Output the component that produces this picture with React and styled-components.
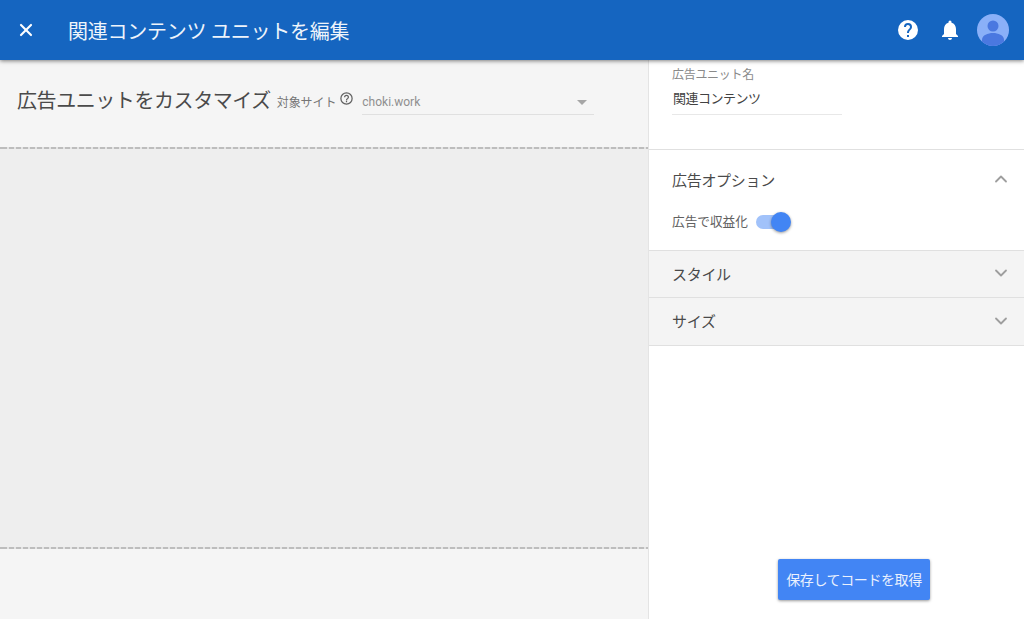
import React from 'react';
import styled, {createGlobalStyle} from 'styled-components';
import {ChevronDown, ChevronUp, X} from 'lucide-react';

const GlobalStyle = createGlobalStyle`
  html, body {
    margin: 0;
    height: 100%;
    overflow: hidden;
    background: #fff;
    font-family: Roboto, "Noto Sans CJK JP", sans-serif;
  }
  #root {
    height: 100%;
  }
`;

const Page = styled.div`
  display: flex;
  flex-direction: column;
  height: 619px;
`;

const Header = styled.header`
  position: relative;
  z-index: 2;
  display: flex;
  align-items: center;
  flex: 0 0 60px;
  padding: 0 15px 0 16px;
  background: #1565c0;
  box-shadow: 0 1px 4px rgba(0, 0, 0, 0.5);
  color: #fff;
`;

const CloseButton = styled.div`
  display: flex;
  width: 20px;
  height: 20px;
  margin-right: 33px;
`;

const HeaderTitle = styled.div`
  flex: 1;
  margin-left: -1px;
  font-size: 20px;
  letter-spacing: -0.25px;
  color: #eef4fb;
`;

const HeaderActions = styled.div`
  display: flex;
  align-items: center;
  gap: 18px;

  & > svg:last-child {
    margin-left: -3px;
  }
`;

const Body = styled.div`
  display: flex;
  flex: 1;
  min-height: 0;
`;

const Preview = styled.main`
  display: flex;
  flex-direction: column;
  flex: 0 0 649px;
  box-sizing: border-box;
  border-right: 1px solid #e4e4e4;
  background: #f5f5f5;
`;

const PreviewBar = styled.div`
  display: flex;
  align-items: center;
  flex: 0 0 87px;
  box-sizing: border-box;
  padding: 0 54px 8px 17px;
`;

const PreviewTitle = styled.h1`
  margin: 0 6px 0 0;
  font-size: 20px;
  font-weight: 400;
  letter-spacing: -0.43px;
  color: #4a4a4a;
`;

const SiteLabel = styled.span`
  margin-top: 3px;
  font-size: 12px;
  letter-spacing: -0.1px;
  color: #757575;
`;

const HelpWrap = styled.span`
  display: flex;
  margin: -2px 8px 0 3px;
`;

const SiteSelect = styled.div`
  display: flex;
  flex: 1;
  align-items: center;
  justify-content: space-between;
  box-sizing: border-box;
  height: 30px;
  margin-top: 1px;
  padding: 5px 7px 0 0;
  border-bottom: 1px solid #e0e0e0;
  font-size: 12px;
  color: #8f8f8f;
`;

const Caret = styled.span`
  width: 0;
  height: 0;
  border-left: 5px solid transparent;
  border-right: 5px solid transparent;
  border-top: 5px solid #a6a6a6;
`;

const DashedRule = styled.div`
  flex: 0 0 2px;
  background: repeating-linear-gradient(90deg, #bdbdbd 0 5px, #e4e4e4 5px 7px) 2px 0;
`;

const Canvas = styled.div`
  flex: 0 0 398px;
  background: #eeeeee;
`;

const Sidebar = styled.aside`
  display: flex;
  flex-direction: column;
  flex: 1;
  background: #fff;
`;

const NameBlock = styled.div`
  flex: 0 0 90px;
  box-sizing: border-box;
  padding: 7px 23px 0;
  border-bottom: 1px solid #e0e0e0;
`;

const FieldLabel = styled.div`
  font-size: 12px;
  line-height: 16px;
  letter-spacing: -0.3px;
  color: #8a8a8a;
`;

const FieldValue = styled.div`
  box-sizing: border-box;
  width: 170px;
  height: 32px;
  padding: 7px 0 0 1px;
  border-bottom: 1px solid #e8e8e8;
  font-size: 13px;
  line-height: 18px;
  letter-spacing: -0.5px;
  color: #424242;
`;

const Section = styled.section`
  border-bottom: 1px solid #e0e0e0;
  background: ${({$open}) => ($open ? '#fff' : '#f4f4f4')};
`;

const SectionHeader = styled.div`
  display: flex;
  align-items: center;
  justify-content: space-between;
  box-sizing: border-box;
  height: ${({$open}) => ($open ? '60px' : '46.4px')};
  padding: 0 13px 2px 23px;
  font-size: 15px;
  letter-spacing: -0.3px;
  color: #4a4a4a;
`;

const OptionRow = styled.div`
  display: flex;
  align-items: center;
  height: 24px;
  padding: 0 23px 16px;
  font-size: 12.67px;
  color: #616161;
`;

const OptionLabel = styled.span`
  margin-top: -3px;
`;

const Toggle = styled.span`
  position: relative;
  width: 31px;
  height: 14px;
  margin-left: 8px;
  border-radius: 7px;
  background: #a1c2fa;

  &::after {
    content: '';
    position: absolute;
    top: -3px;
    right: -4px;
    width: 20px;
    height: 20px;
    border-radius: 50%;
    background: #4285f4;
    box-shadow: 0 1px 3px rgba(0, 0, 0, 0.4);
  }
`;

const Footer = styled.div`
  display: flex;
  flex: 1;
  align-items: flex-end;
  justify-content: flex-end;
  padding: 0 94px 19px 0;
`;

const SaveButton = styled.button`
  width: 152px;
  height: 41px;
  padding: 0 0 2px;
  border: 0;
  border-radius: 2px;
  background: #4285f4;
  box-shadow: 0 1px 3px rgba(0, 0, 0, 0.4);
  font-family: inherit;
  font-size: 14px;
  letter-spacing: -0.4px;
  color: #eaf1fe;
`;

const HelpIcon = () => (
  <svg width="24" height="24" viewBox="0 0 24 24">
    <path fill="#fff" d="M12 2a10 10 0 1 0 0 20 10 10 0 0 0 0-20zm1 17h-2v-2h2v2zm2.07-7.75-.9.92C13.45 12.9 13 13.5 13 15h-2v-.5c0-1.1.45-2.1 1.17-2.83l1.24-1.26A2 2 0 1 0 10 9H8a4 4 0 1 1 8 0c0 .88-.36 1.68-.93 2.25z" />
  </svg>
);

const BellIcon = () => (
  <svg width="24" height="24" viewBox="0 0 24 24">
    <path fill="#fff" d="M12 22c1.1 0 2-.9 2-2h-4c0 1.1.9 2 2 2zm6-6v-5c0-3.07-1.63-5.64-4.5-6.32V4a1.5 1.5 0 0 0-3 0v.68C7.64 5.36 6 7.92 6 11v5l-2 2v1h16v-1l-2-2z" />
  </svg>
);

const Avatar = () => (
  <svg width="32" height="32" viewBox="0 0 32 32">
    <defs>
      <clipPath id="avatar-clip">
        <circle cx="16" cy="16" r="16" />
      </clipPath>
    </defs>
    <g clipPath="url(#avatar-clip)">
      <rect width="32" height="32" fill="#8ab0f8" />
      <circle cx="16" cy="12" r="5.5" fill="#4a78e0" />
      <path fill="#4a78e0" d="M5 32v-6c0-5 6-7 11-7s11 2 11 7v6z" />
    </g>
  </svg>
);

const SmallHelp = () => (
  <svg width="15" height="15" viewBox="0 0 24 24">
    <path fill="#616161" d="M11 18h2v-2h-2v2zm1-16a10 10 0 1 0 0 20 10 10 0 0 0 0-20zm0 18a8 8 0 1 1 0-16 8 8 0 0 1 0 16zm0-14a4 4 0 0 0-4 4h2a2 2 0 1 1 4 0c0 2-3 1.75-3 5h2c0-2.25 3-2.5 3-5a4 4 0 0 0-4-4z" />
  </svg>
);

const App = () => {
  return (
    <Page>
      <GlobalStyle />
      <Header>
        <CloseButton>
          <X size={20} strokeWidth={2.6} color="#fff" />
        </CloseButton>
        <HeaderTitle>関連コンテンツ ユニットを編集</HeaderTitle>
        <HeaderActions>
          <HelpIcon />
          <BellIcon />
          <Avatar />
        </HeaderActions>
      </Header>
      <Body>
        <Preview>
          <PreviewBar>
            <PreviewTitle>広告ユニットをカスタマイズ</PreviewTitle>
            <SiteLabel>対象サイト</SiteLabel>
            <HelpWrap><SmallHelp /></HelpWrap>
            <SiteSelect>
              choki.work
              <Caret />
            </SiteSelect>
          </PreviewBar>
          <DashedRule />
          <Canvas />
          <DashedRule />
        </Preview>
        <Sidebar>
          <NameBlock>
            <FieldLabel>広告ユニット名</FieldLabel>
            <FieldValue>関連コンテンツ</FieldValue>
          </NameBlock>
          <Section $open>
            <SectionHeader $open>
              広告オプション
              <ChevronUp size={20} strokeWidth={2.2} color="#9e9e9e" />
            </SectionHeader>
            <OptionRow>
              <OptionLabel>広告で収益化</OptionLabel>
              <Toggle />
            </OptionRow>
          </Section>
          <Section>
            <SectionHeader>
              スタイル
              <ChevronDown size={20} strokeWidth={2.2} color="#9e9e9e" />
            </SectionHeader>
          </Section>
          <Section>
            <SectionHeader>
              サイズ
              <ChevronDown size={20} strokeWidth={2.2} color="#9e9e9e" />
            </SectionHeader>
          </Section>
          <Footer>
            <SaveButton>保存してコードを取得</SaveButton>
          </Footer>
        </Sidebar>
      </Body>
    </Page>
  );
};

export default App;
